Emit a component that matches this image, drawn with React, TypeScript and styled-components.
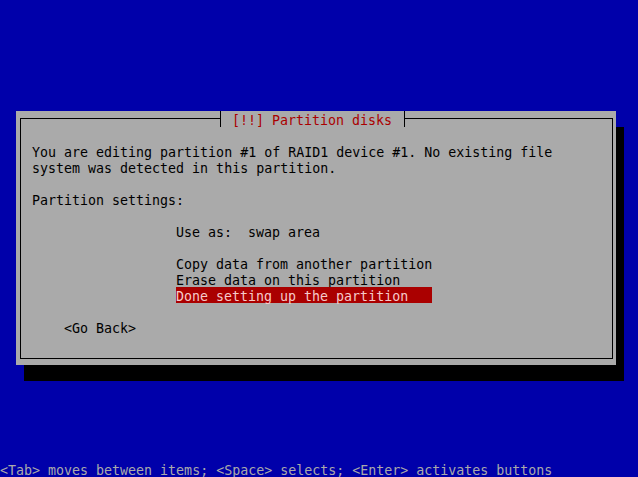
import styled, { createGlobalStyle } from 'styled-components';

const GlobalStyle = createGlobalStyle`
  html, body {
    margin: 0;
    padding: 0;
    background: #0000aa;
  }
  body {
    font-family: "DejaVu Sans Mono", "Liberation Mono", monospace;
    font-size: 13.3px;
  }
`;

// every text cell is one 16px row, text sits a little low as on the console
const Screen = styled.div`
  width: 638px;
  height: 477px;
  overflow: hidden;
  display: flex;
  flex-direction: column;
  background: #0000aa;
  white-space: pre;
`;

const Dialog = styled.section`
  margin: 111px 0 0 16px;
  width: 600px;
  height: 256px;
  background: #aaaaaa;
  box-shadow: 8px 16px 0 #000000;
  display: flex;
  flex-direction: column;
`;

const Frame = styled.div`
  position: relative;
  margin: 7px 0 0 4px;
  width: 593px;
  height: 241px;
  box-sizing: border-box;
  border: 1px solid #000000;
  padding: 8px 0 0 11px;
  display: flex;
  flex-direction: column;
  color: #000000;
`;

const Title = styled.div`
  position: absolute;
  top: -8px;
  left: 195px;
  display: flex;
  height: 16px;
  background: #aaaaaa;
  color: #aa0000;
`;

const TitleText = styled.span`
  height: 16px;
  box-sizing: border-box;
  padding-top: 4px;
  line-height: 12px;
`;

const Tee = styled.span<{ $side: 'left' | 'right' }>`
  position: relative;
  width: 8px;
  height: 16px;
  &::before {
    content: '';
    position: absolute;
    left: 4px;
    top: 0;
    width: 1px;
    height: 16px;
    background: #000000;
  }
  &::after {
    content: '';
    position: absolute;
    top: 7px;
    height: 1px;
    width: 4px;
    left: ${(p) => (p.$side === 'left' ? '0' : '4px')};
    background: #000000;
  }
`;

const Line = styled.div<{ $indent?: number }>`
  height: 16px;
  box-sizing: border-box;
  padding-top: 4px;
  line-height: 12px;
  padding-left: ${(p) => (p.$indent ?? 0) * 8}px;
`;

const MenuItem = styled.div<{ $active?: boolean }>`
  margin-left: 144px;
  width: 256px;
  height: 16px;
  box-sizing: border-box;
  padding-top: 4px;
  line-height: 12px;
  background: ${(p) => (p.$active ? '#aa0000' : 'transparent')};
  color: ${(p) => (p.$active ? '#f6caca' : '#000000')};
`;

const Status = styled.div`
  margin-top: 96px;
  height: 16px;
  box-sizing: border-box;
  padding-top: 4px;
  line-height: 12px;
  color: #aaaaaa;
`;

const menu = [
  'Copy data from another partition',
  'Erase data on this partition',
  'Done setting up the partition',
];

export default function App() {
  return (
    <Screen>
      <GlobalStyle />
      <Dialog>
        <Frame>
          <Title>
            <Tee $side="left" />
            <TitleText> [!!] Partition disks </TitleText>
            <Tee $side="right" />
          </Title>
          <Line />
          <Line>You are editing partition #1 of RAID1 device #1. No existing file</Line>
          <Line>system was detected in this partition.</Line>
          <Line />
          <Line>Partition settings:</Line>
          <Line />
          <Line $indent={18}>Use as:  swap area</Line>
          <Line />
          {menu.map((m, i) => (
            <MenuItem key={m} $active={i === menu.length - 1}>{m}</MenuItem>
          ))}
          <Line />
          <Line $indent={4}>{'<Go Back>'}</Line>
        </Frame>
      </Dialog>
      <Status>{'<Tab> moves between items; <Space> selects; <Enter> activates buttons'}</Status>
    </Screen>
  );
}
